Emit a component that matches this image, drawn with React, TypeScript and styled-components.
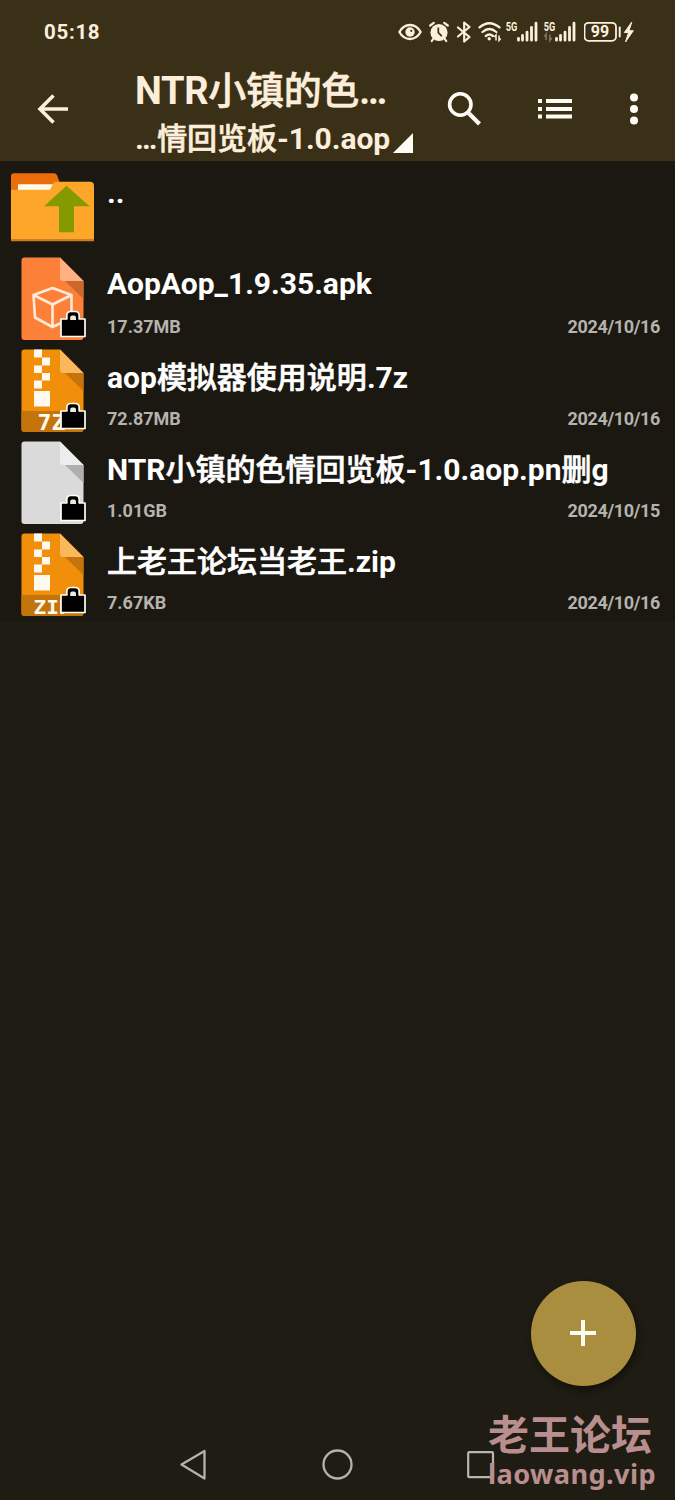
import React from 'react';
import styled, { createGlobalStyle } from 'styled-components';

const GlobalStyle = createGlobalStyle`
  * { box-sizing: border-box; }
  body { margin: 0; background: #1f1c13; }
`;

const Screen = styled.div`
  position: relative;
  display: flex;
  flex-direction: column;
  width: 675px;
  height: 1500px;
  overflow: hidden;
  background: #1f1c13;
  color: #fff;
  font-family: Roboto, 'Noto Sans CJK SC', sans-serif;
  font-weight: 700;
`;

const Header = styled.header`
  height: 161px;
  background: #3a3018;
  color: #fdeedb;
`;

const StatusBar = styled.div`
  display: flex;
  align-items: center;
  height: 64px;
  padding: 0 40px 0 44px;
`;

const Clock = styled.time`
  flex: 1;
  font-size: 20.5px;
  line-height: 24px;
  letter-spacing: 0.7px;
`;

const StatusIcons = styled.div`
  display: flex;
  align-items: center;
  color: #fcefdc;
  svg { display: block; }
`;

const StatusGlyph = styled.span<{ $gap: number }>`
  margin-left: ${p => p.$gap}px;
`;

const AppBar = styled.div`
  display: flex;
  height: 97px;
`;

const IconButton = styled.button<{ $width: number }>`
  display: flex;
  align-items: center;
  justify-content: center;
  width: ${p => p.$width}px;
  height: 89px;
  padding: 0;
  border: 0;
  background: none;
  color: #fffcf5;
`;

const Titles = styled.div`
  display: flex;
  flex-direction: column;
  width: 283px;
  margin-left: 30px;
`;

const Title = styled.h1`
  margin: 4px 0 0;
  font-size: 38px;
  line-height: 46px;
  font-weight: 700;
  letter-spacing: -0.3px;
  white-space: nowrap;
`;

const Subtitle = styled.div`
  display: flex;
  align-items: flex-end;
  font-size: 30px;
  line-height: 40px;
  margin-top: 5px;
  letter-spacing: -0.05px;
  white-space: nowrap;
`;

const Spinner = styled.svg`
  margin: 0 0 6px 2px;
`;

const Han = styled.span`
  font-weight: 500;
  -webkit-text-stroke: 0.6px currentColor;
`;

const List = styled.ul`
  margin: 0;
  padding: 0;
  list-style: none;
  background: #1b1811;
`;

const Row = styled.li`
  display: flex;
  height: 92px;
`;

const RowIcon = styled.div`
  width: 107px;
  height: 92px;
  flex: none;
  svg { display: block; }
`;

const RowBody = styled.div<{ $top: number }>`
  flex: 1;
  padding: ${p => p.$top}px 15px 0 0;
`;

const FileName = styled.div`
  font-size: 30px;
  line-height: 42px;
  white-space: nowrap;
`;

const Meta = styled.div<{ $gap: number }>`
  display: flex;
  justify-content: space-between;
  margin-top: ${p => p.$gap}px;
  font-size: 18px;
  line-height: 22px;
  color: #b5b3ae;
`;

const FileDate = styled.span`
  letter-spacing: -0.35px;
`;

const Fab = styled.button`
  position: absolute;
  left: 530.5px;
  top: 1280.5px;
  display: flex;
  align-items: center;
  justify-content: center;
  width: 105px;
  height: 105px;
  padding: 0;
  border: 0;
  border-radius: 50%;
  background: #aa8e40;
  box-shadow: 2px 4px 8px rgba(0, 0, 0, 0.45);
`;

const NavBar = styled.nav`
  display: flex;
  align-items: center;
  height: 70px;
  margin-top: auto;
  padding-left: 178.5px;
  svg { display: block; }
`;

const NavButton = styled.span<{ $width: number }>`
  width: ${p => p.$width}px;
`;

const Watermark = styled.div`
  position: absolute;
  left: 488px;
  top: 1406px;
  color: #b98e8f;
  font-family: 'Noto Sans CJK SC', sans-serif;
  white-space: nowrap;
`;

const WatermarkName = styled.div`
  font-size: 41px;
  line-height: 52px;
  font-weight: 700;
`;

const WatermarkSite = styled.div`
  font-family: 'Noto Sans', sans-serif;
  font-size: 27.2px;
  line-height: 32px;
  font-weight: 700;
  letter-spacing: 0.4px;
`;

const Eye = () => (
  <svg width="24" height="24" viewBox="0 0 24 24">
    <path d="M1.4 12C4 7.3 7.500 5 12 5s8 2.300 10.600 7C20 16.700 16.500 19 12 19S4 16.700 1.400 12Z" fill="none" stroke="currentColor" strokeWidth="2.300" />
    <circle cx="12" cy="12" r="4.700" fill="currentColor" />
    <circle cx="13.300" cy="10.800" r="1.100" fill="#3a3018" />
  </svg>
);

const Alarm = () => (
  <svg width="20" height="24" viewBox="0 0 20 24">
    <circle cx="10" cy="12.500" r="8.600" fill="currentColor" />
    <path d="M1.200 5.500 4.800 2.800M18.800 5.500l-3.600-2.700M4.500 18.500 2.800 21M15.500 18.500l1.700 2.500" stroke="currentColor" strokeWidth="2.200" strokeLinecap="round" />
    <path d="M9.300 7.500v5.200l3.500 3.500" fill="none" stroke="#3a3018" strokeWidth="1.700" />
  </svg>
);

const Bluetooth = () => (
  <svg width="14" height="24" viewBox="0 0 14 24">
    <path d="M1 7.500 12.500 17 7.200 21.500V2.500L12.500 7 1 16.500" fill="none" stroke="currentColor" strokeWidth="2.200" strokeLinejoin="round" strokeLinecap="round" />
  </svg>
);

const Wifi = () => (
  <svg width="24" height="24" viewBox="0 0 24 24">
    <path d="M1.500 7.400q9.700-8.400 20 0M4.500 12q6.900-6 13.800 0M7.800 16q3.600-3 7.200 0" fill="none" stroke="currentColor" strokeWidth="2.300" strokeLinecap="round" />
    <circle cx="11.200" cy="18.800" r="1.700" fill="currentColor" />
    <path d="M18 20.500v-5.500l-1.700 2M21 15.500v5l1.700-2" fill="none" stroke="currentColor" strokeWidth="1.500" />
  </svg>
);

const Signal = ({ data }: { data?: boolean }) => (
  <svg width="33" height="24" viewBox="0.7 0 33 24">
    <text x="0.500" y="10.500" fontFamily="Roboto, sans-serif" fontWeight="700" fontSize="12" textLength="11.500" lengthAdjust="spacingAndGlyphs" fill="currentColor">5G</text>
    <path d="M13.200 20.200v-1.700M17.200 20.200v-4.700M21.700 20.200v-8M26.200 20.200V7.500M30.700 20.200V3.200" stroke="currentColor" strokeWidth="2.800" strokeLinecap="round" />
    {data && <path d="M2.800 20v-6L1 16.500M6.500 14.500v6l2-2.500" fill="none" stroke="#81775f" strokeWidth="1.500" />}
  </svg>
);

const Battery = () => (
  <svg width="51" height="24" viewBox="0.7 0 51 24">
    <rect x="1.200" y="2.800" width="31.500" height="18" rx="4" fill="none" stroke="currentColor" strokeWidth="1.800" />
    <text x="7.500" y="17.400" fontFamily="Roboto, sans-serif" fontWeight="700" fontSize="16" textLength="18.500" fill="currentColor">99</text>
    <path d="M36.400 7.500v9" stroke="currentColor" strokeWidth="2" strokeLinecap="round" />
    <path d="M48.500 2 41 12.500h4.200L42.200 22 50 10.700h-4.300Z" fill="currentColor" stroke="currentColor" strokeWidth="1" />
  </svg>
);

const FolderUpIcon = () => (
  <svg width="107" height="92" viewBox="0 0.7 107 92">
    <path d="M11 35V16q0-3 3-3h40q2 0 3 2l5 13v7Z" fill="#ec6d09" />
    <path d="M18 24h36v6H18Z" fill="#fffbed" />
    <path d="M11 29.500h39l3-6q1-2 3-2h34q4 0 4 4v55H11Z" fill="#fda629" />
    <path d="M11 78.800h83v2.200H11Z" fill="#c87e1c" />
    <path d="M66.500 25.500 89.500 46H74v26H59V46H44Z" fill="#859900" />
  </svg>
);

type Kind = 'apk' | '7z' | 'blank' | 'zip';

const sheetColors: Record<Kind, [string, string, string]> = {
  apk: ['#fd8038', '#ffb182', '#cc682d'],
  '7z': ['#f18f0b', '#fbb75c', '#c3750c'],
  blank: ['#dbdadb', '#ededed', '#b0afb0'],
  zip: ['#f18f0b', '#fbb75c', '#c3750c'],
};

const Lock = () => (
  <g>
    <path d="M66.800 66v-3.500q0-4 4-4h4.400q4 0 4 4V66h5.800V83.500H61V66Z" fill="#000" stroke="#fffdf5" strokeWidth="1.700" strokeLinejoin="round" />
    <path d="M70.200 67v-2.500q0-2 2-2h1.800q2 0 2 2V67Z" fill="#f0e9de" />
  </g>
);

const FileIcon = ({ kind }: { kind: Kind }) => {
  const [base, fold, shade] = sheetColors[kind];
  const archive = kind === '7z' || kind === 'zip';
  return (
    <svg width="107" height="92" viewBox="0 0 107 92">
      <path d="M24.500 4.500H60L83.500 28v56q0 3-3 3h-56q-3 0-3-3V7.500q0-3 3-3Z" fill={base} />
      <path d="M60 4.500 83.500 28H63q-3 0-3-3Z" fill={fold} />
      <path d="M65 28h18.500v18Z" fill={shade} />
      {kind === 'apk' && (
        <path d="M52.500 35 71.500 42v23L52.500 74 35 64.500 33.500 42ZM33.500 42l19 9.500 19-9.500M52.500 51.500V74" fill="none" stroke="#ffeada" strokeWidth="2.600" strokeLinejoin="round" />
      )}
      {archive && (
        <g fill="#fff9ef">
          <path d="M34 4.500h8v8h-8ZM42 12.500h8v8h-8ZM34 20.500h8v7.500h-8ZM42 28h8v7.500h-8ZM34 35.500h8v8h-8ZM34 46h16v15.500H34Z" />
          <path d="M21.500 66h62v18q0 3-3 3h-56q-3 0-3-3Z" fill={shade} />
          <text x={kind === 'zip' ? 33.5 : 37.5} y="84.500" fontFamily="'DejaVu Sans Mono', monospace" fontWeight="700" fontSize={kind === 'zip' ? 19.5 : 20.5} textLength={kind === 'zip' ? 38 : 28} lengthAdjust="spacingAndGlyphs">
            {kind === 'zip' ? 'ZIP' : '7Z'}
          </text>
        </g>
      )}
      <Lock />
    </svg>
  );
};

interface Entry {
  kind: Kind;
  name: React.ReactNode;
  size: string;
  date: string;
}

const entries: Entry[] = [
  { kind: 'apk', name: 'AopAop_1.9.35.apk', size: '17.37MB', date: '2024/10/16' },
  { kind: '7z', name: <>aop<Han>模拟器使用说明</Han>.7z</>, size: '72.87MB', date: '2024/10/16' },
  { kind: 'blank', name: <>NTR<Han>小镇的色情回览板</Han>-1.0.aop.pn<Han>删</Han>g</>, size: '1.01GB', date: '2024/10/15' },
  { kind: 'zip', name: <><Han>上老王论坛当老王</Han>.zip</>, size: '7.67KB', date: '2024/10/16' },
];

export default function App() {
  return (
    <Screen>
      <GlobalStyle />
      <Header>
        <StatusBar>
          <Clock>05:18</Clock>
          <StatusIcons>
            <StatusGlyph $gap={0}><Eye /></StatusGlyph>
            <StatusGlyph $gap={7}><Alarm /></StatusGlyph>
            <StatusGlyph $gap={8}><Bluetooth /></StatusGlyph>
            <StatusGlyph $gap={7}><Wifi /></StatusGlyph>
            <StatusGlyph $gap={4}><Signal /></StatusGlyph>
            <StatusGlyph $gap={5}><Signal data /></StatusGlyph>
            <StatusGlyph $gap={7}><Battery /></StatusGlyph>
          </StatusIcons>
        </StatusBar>
        <AppBar>
          <IconButton $width={105} aria-label="Back">
            <svg width="34" height="34" viewBox="0 0 34 34">
              <path d="M17.500 3.500 4 17l13.500 13.500M4.500 17H32" fill="none" stroke="#fdeedb" strokeWidth="3.600" />
            </svg>
          </IconButton>
          <Titles>
            <Title>NTR<Han>小镇的色</Han>…</Title>
            <Subtitle>
              <span>…<Han>情回览板</Han>-1.0.aop</span>
              <Spinner width="21" height="20" viewBox="0 0 21 20"><path d="M21 0v20H1Z" fill="#fffcf5" /></Spinner>
            </Subtitle>
          </Titles>
          <IconButton $width={92} aria-label="Search">
            <svg width="36" height="36" viewBox="0 0.5 36 36">
              <circle cx="14.300" cy="14" r="10.700" fill="none" stroke="currentColor" strokeWidth="3.600" />
              <path d="m22.500 22.500 11 11" stroke="currentColor" strokeWidth="4.200" />
            </svg>
          </IconButton>
          <IconButton $width={90} aria-label="List view">
            <svg width="34" height="20" viewBox="0 0 34 20">
              <path d="M0 2h4M8 2h26M0 10h4M8 10h26M0 17.500h4M8 17.500h26" stroke="currentColor" strokeWidth="3.800" />
            </svg>
          </IconButton>
          <IconButton $width={67} aria-label="More">
            <svg width="8" height="32" viewBox="0 0 8 32">
              <circle cx="4" cy="4.500" r="4" fill="currentColor" />
              <circle cx="4" cy="16" r="4" fill="currentColor" />
              <circle cx="4" cy="27.500" r="4" fill="currentColor" />
            </svg>
          </IconButton>
        </AppBar>
      </Header>
      <List>
        <Row>
          <RowIcon><FolderUpIcon /></RowIcon>
          <RowBody $top={10.5}><FileName>..</FileName></RowBody>
        </Row>
        {entries.map((e, i) => (
          <Row key={e.kind}>
            <RowIcon><FileIcon kind={e.kind} /></RowIcon>
            <RowBody $top={i === 0 ? 10 : 12}>
              <FileName>{e.name}</FileName>
              <Meta $gap={i === 0 ? 11 : 9}><span>{e.size}</span><FileDate>{e.date}</FileDate></Meta>
            </RowBody>
          </Row>
        ))}
      </List>
      <Fab aria-label="Add">
        <svg width="26" height="26" viewBox="0 0 26 26">
          <path d="M13 0v26M0 13h26" stroke="#fffdf0" strokeWidth="4" />
        </svg>
      </Fab>
      <Watermark>
        <WatermarkName>老王论坛</WatermarkName>
        <WatermarkSite>laowang.vip</WatermarkSite>
      </Watermark>
      <NavBar>
        <NavButton $width={143}>
          <svg width="28" height="32" viewBox="0 0 28 32">
            <path d="M2.500 15.500 25.500 2v27.500Z" fill="none" stroke="#b5b2a8" strokeWidth="2.300" strokeLinejoin="round" />
          </svg>
        </NavButton>
        <NavButton $width={144}>
          <svg width="32" height="32" viewBox="0 0 32 32">
            <circle cx="15.500" cy="15.500" r="14" fill="none" stroke="#b5b2a8" strokeWidth="2.300" />
          </svg>
        </NavButton>
        <NavButton $width={30}>
          <svg width="30" height="30" viewBox="0 0 30 30">
            <rect x="2.200" y="2.200" width="24.800" height="25" rx="1" fill="none" stroke="#b5b8aa" strokeWidth="2.200" />
          </svg>
        </NavButton>
      </NavBar>
    </Screen>
  );
}
